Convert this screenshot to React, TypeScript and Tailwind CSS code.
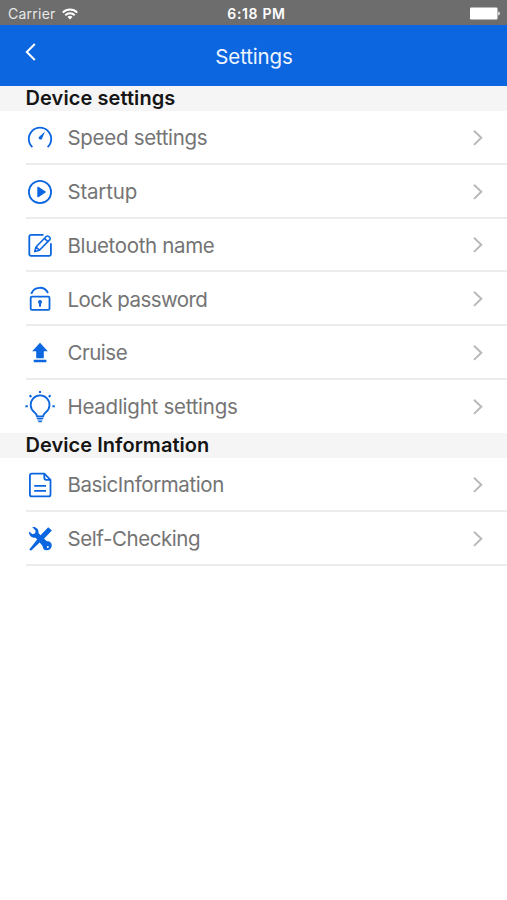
import type { ReactNode } from "react";

const BLUE = "#0b66e0";

function Glyph({ children }: { children: ReactNode }) {
  return (
    <svg width="32" height="36" viewBox="0 0 32 36" fill="none" stroke={BLUE} strokeWidth="1.8" className="shrink-0">
      {children}
    </svg>
  );
}

const SpeedIcon = () => (
  <Glyph>
    <path d="M8.4 27.1A11.2 11.2 0 1 1 23.6 27.1" />
    <path d="M21 11.6 17.9 19a1.9 1.9 0 0 1-3.2-1.8Z" fill={BLUE} stroke="none" />
  </Glyph>
);

const StartIcon = () => (
  <Glyph>
    <circle cx="16" cy="18" r="11.1" />
    <path d="M14 13.4v9.2l7.2-4.6Z" fill={BLUE} strokeWidth="1.4" strokeLinejoin="round" />
  </Glyph>
);

const EditIcon = () => (
  <Glyph>
    <path d="M19.5 7.8H7a1.7 1.7 0 0 0-1.7 1.7v17.6A1.7 1.7 0 0 0 7 28.8h18.2a1.7 1.7 0 0 0 1.7-1.7V16.3" />
    <path d="m12 20 10.2-10.5a1.8 1.8 0 0 1 2.6 0l.8.8a1.8 1.8 0 0 1 0 2.6L15.4 23.2l-4.7 1.4Zm0 0 3.4 3.2M20.5 11.4l3.3 3.2" strokeWidth="1.6" strokeLinejoin="round" />
  </Glyph>
);

const LockIcon = () => (
  <Glyph>
    <rect x="6.7" y="15.7" width="18.8" height="13.2" rx="1.2" />
    <path d="M7.3 12.9A9 9 0 0 1 24 12" />
    <path d="M16 20.4v5.4" strokeWidth="2" />
    <circle cx="16" cy="20.9" r="2" fill={BLUE} stroke="none" />
  </Glyph>
);

const CruiseIcon = () => (
  <Glyph>
    <path d="m16 7.8 7.8 8.4h-4v7h-7.6v-7h-4ZM9.7 24.8h12.7v2.5H9.7Z" fill={BLUE} stroke="none" />
  </Glyph>
);

const LightIcon = () => (
  <Glyph>
    <path d="M13 27.3c-.3-2-1.3-3-2.9-4.3a9.4 9.4 0 1 1 12 0c-1.6 1.3-2.6 2.3-2.9 4.3Z" />
    <path d="M12.7 29.4h6.6M13.4 31h5.2M14.4 32.6h3.4" strokeWidth="1.2" />
    <path d="M16 1.9v2.2M5.6 6.3l1.7 1.7M26.5 6.3l-1.7 1.7M1.4 17.3h2.4M28.4 17.3h2.4" strokeWidth="2" />
  </Glyph>
);

const DocIcon = () => (
  <Glyph>
    <path d="M20.3 6.6H7.9a2 2 0 0 0-2 2v18.8a2 2 0 0 0 2 2h16.6a2 2 0 0 0 2-2V12.8Z" strokeLinejoin="round" />
    <path d="M20.3 6.7v4.1a2 2 0 0 0 2 2h4.2M10.2 18.8h11.8M10.2 23.8h11.8" />
  </Glyph>
);

const ToolsIcon = () => (
  <Glyph>
    <path d="M24.2 6.2 27.9 9.4 18.6 19.2 15.1 15.8ZM14.7 16.4l3 3L7 29.8 5.3 28.4Z" fill={BLUE} stroke="none" strokeLinejoin="round" />
    <path d="M8.2 6.1c3.8-.6 6.8 2.1 6.3 5.9l2.6 3.1 2.7 2.4 3.1 2.8c2.8-.3 5.2 1.8 4.8 4.7-.3 3-3 4.7-5.6 4.3-2.2-.3-3.4-2.1-3.5-4.4l-5.8-6.8-1.3-1.3c-3.6.5-7-2.2-6.4-6.2L8.6 13.2l2.6-.9.4-2.5Z" fill={BLUE} stroke="none" />
    <circle cx="23.8" cy="26" r="1" fill="white" stroke="none" />
  </Glyph>
);

function Row({ icon, label, tracking, last }: { icon: ReactNode; label: string; tracking: string; last?: boolean }) {
  return (
    <li className={`ml-[26px] flex items-center pr-[23px] pt-[2px] ${last ? "h-[53.25px] border-b border-transparent" : "h-[53.75px] border-b-2 border-[#ececec]"}`}>
      <span className="-ml-[2px] flex">{icon}</span>
      <span className={`ml-[11.5px] flex-1 whitespace-nowrap pt-px text-[20.5px] leading-6 text-[#747474] ${tracking}`}>{label}</span>
      <svg width="12" height="18" viewBox="0 0 12 18" fill="none" stroke="#b9b9bb" strokeWidth="2">
        <path d="m2 1.7 7.3 7.1L2 15.9" />
      </svg>
    </li>
  );
}

function Heading({ children, tracking }: { children: string; tracking: string }) {
  return (
    <h2 className={`flex h-[25px] items-center bg-[#f5f5f5] pb-px pl-[25.5px] text-[20px] font-semibold leading-6 text-[#151515] ${tracking}`}>
      {children}
    </h2>
  );
}

export default function App() {
  return (
    <div className="h-[900px] w-[507px] overflow-hidden bg-white font-['Inter','Liberation_Sans',sans-serif]">
      <div className="grid h-[25px] grid-cols-3 items-center bg-[#6d6d6d] pl-[8px] pr-[7px] text-white">
        <div className="flex items-center gap-[6px] pt-[2px]">
          <span className="text-[14px] leading-5 tracking-[0.25px] text-[#e8e8e8]">Carrier</span>
          <svg width="16" height="12" viewBox="0 0 16 12" fill="none" stroke="white" strokeWidth="2">
            <path d="M.8 4.6a10.2 10.2 0 0 1 14.4 0M3.3 7.3a6.7 6.7 0 0 1 9.4 0" />
            <path d="M8 11.4 5.5 9a3.6 3.6 0 0 1 5 0Z" fill="white" stroke="none" />
          </svg>
        </div>
        <span className="whitespace-nowrap pl-[5px] pt-[2px] text-center text-[14px] font-semibold leading-5 tracking-[0.65px]">6:18 PM</span>
        <svg width="30" height="13" viewBox="0 0 30 13" fill="white" className="mt-[2px] justify-self-end">
          <rect x="0" y="0.5" width="27.5" height="12" rx="1.3" />
          <path d="M28.3 4.5c2 .7 2 3.3 0 4Z" />
        </svg>
      </div>
      <header className="grid h-[61px] grid-cols-[1fr_auto_1fr] items-center bg-[#0b66e0]">
        <svg width="14" height="20" viewBox="0 0 14 20" fill="none" stroke="white" strokeWidth="2" className="mb-[7px] ml-[24px]">
          <path d="m10.8 2-8 8 8 8" />
        </svg>
        <h1 className="pl-px pt-[2px] text-[20.5px] leading-6 tracking-[-0.15px] text-[#eef5ff]">Settings</h1>
      </header>
      <main>
        <Heading tracking="tracking-[0.08px]">Device settings</Heading>
        <ul>
          <Row icon={<SpeedIcon />} label="Speed settings" tracking="tracking-[-0.3px]" />
          <Row icon={<StartIcon />} label="Startup" tracking="tracking-[-0.2px]" />
          <Row icon={<EditIcon />} label="Bluetooth name" tracking="tracking-[-0.34px]" />
          <Row icon={<LockIcon />} label="Lock password" tracking="tracking-[-0.57px]" />
          <Row icon={<CruiseIcon />} label="Cruise" tracking="tracking-[-0.48px]" />
          <Row icon={<LightIcon />} label="Headlight settings" tracking="tracking-[-0.26px]" last />
        </ul>
        <Heading tracking="tracking-[0.05px]">Device Information</Heading>
        <ul>
          <Row icon={<DocIcon />} label="BasicInformation" tracking="tracking-[-0.41px]" />
          <Row icon={<ToolsIcon />} label="Self-Checking" tracking="tracking-[-0.42px]" />
        </ul>
      </main>
    </div>
  );
}
